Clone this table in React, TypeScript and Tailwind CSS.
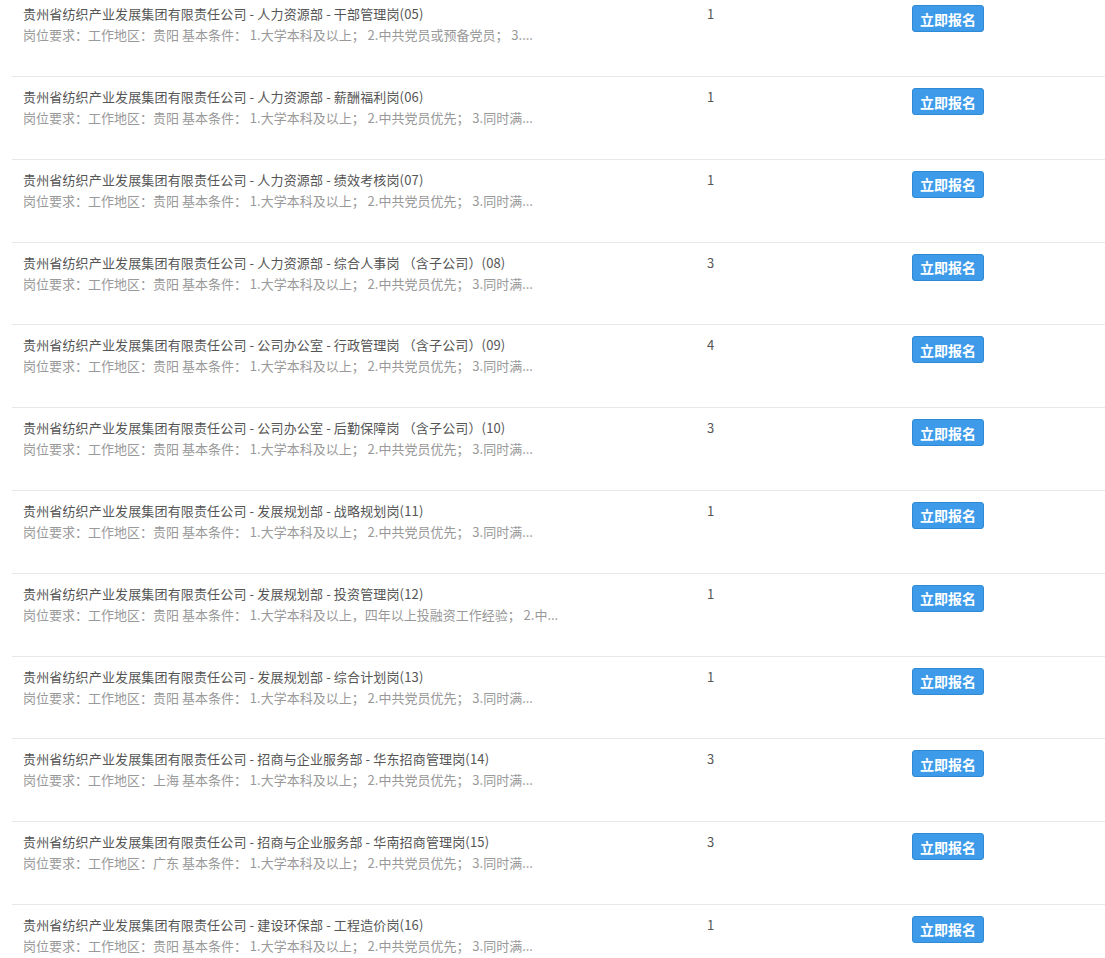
import React from "react";

const rows: { title: string; desc: string; n: string }[] = [
  { title: "贵州省纺织产业发展集团有限责任公司 - 人力资源部 - 干部管理岗(05)", desc: "岗位要求：工作地区：贵阳 基本条件： 1.大学本科及以上； 2.中共党员或预备党员； 3....", n: "1" },
  { title: "贵州省纺织产业发展集团有限责任公司 - 人力资源部 - 薪酬福利岗(06)", desc: "岗位要求：工作地区：贵阳 基本条件： 1.大学本科及以上； 2.中共党员优先； 3.同时满...", n: "1" },
  { title: "贵州省纺织产业发展集团有限责任公司 - 人力资源部 - 绩效考核岗(07)", desc: "岗位要求：工作地区：贵阳 基本条件： 1.大学本科及以上； 2.中共党员优先； 3.同时满...", n: "1" },
  { title: "贵州省纺织产业发展集团有限责任公司 - 人力资源部 - 综合人事岗 （含子公司）(08)", desc: "岗位要求：工作地区：贵阳 基本条件： 1.大学本科及以上； 2.中共党员优先； 3.同时满...", n: "3" },
  { title: "贵州省纺织产业发展集团有限责任公司 - 公司办公室 - 行政管理岗 （含子公司）(09)", desc: "岗位要求：工作地区：贵阳 基本条件： 1.大学本科及以上； 2.中共党员优先； 3.同时满...", n: "4" },
  { title: "贵州省纺织产业发展集团有限责任公司 - 公司办公室 - 后勤保障岗 （含子公司）(10)", desc: "岗位要求：工作地区：贵阳 基本条件： 1.大学本科及以上； 2.中共党员优先； 3.同时满...", n: "3" },
  { title: "贵州省纺织产业发展集团有限责任公司 - 发展规划部 - 战略规划岗(11)", desc: "岗位要求：工作地区：贵阳 基本条件： 1.大学本科及以上； 2.中共党员优先； 3.同时满...", n: "1" },
  { title: "贵州省纺织产业发展集团有限责任公司 - 发展规划部 - 投资管理岗(12)", desc: "岗位要求：工作地区：贵阳 基本条件： 1.大学本科及以上，四年以上投融资工作经验； 2.中...", n: "1" },
  { title: "贵州省纺织产业发展集团有限责任公司 - 发展规划部 - 综合计划岗(13)", desc: "岗位要求：工作地区：贵阳 基本条件： 1.大学本科及以上； 2.中共党员优先； 3.同时满...", n: "1" },
  { title: "贵州省纺织产业发展集团有限责任公司 - 招商与企业服务部 - 华东招商管理岗(14)", desc: "岗位要求：工作地区：上海 基本条件： 1.大学本科及以上； 2.中共党员优先； 3.同时满...", n: "3" },
  { title: "贵州省纺织产业发展集团有限责任公司 - 招商与企业服务部 - 华南招商管理岗(15)", desc: "岗位要求：工作地区：广东 基本条件： 1.大学本科及以上； 2.中共党员优先； 3.同时满...", n: "3" },
  { title: "贵州省纺织产业发展集团有限责任公司 - 建设环保部 - 工程造价岗(16)", desc: "岗位要求：工作地区：贵阳 基本条件： 1.大学本科及以上； 2.中共党员优先； 3.同时满...", n: "1" },
];

export default function App() {
  return (
    <div
      className="w-[1105px] h-[958px] overflow-hidden bg-white"
      style={{ fontFamily: '"Microsoft YaHei", "Noto Sans CJK SC", "Noto Sans", sans-serif' }}
    >
      <div className="mt-[-5.8px] ml-[12px]">
        {rows.map((r, i) => (
          <div
            key={i}
            className="box-border h-[82.8px] border-b border-[#e8e8e8] flex pl-[11px] pt-[10px]"
          >
            <div className="w-[684px] shrink-0">
              <div className="text-[13px] leading-[20px] text-[#555] whitespace-nowrap tracking-[0.15px]">{r.title}</div>
              <div className="text-[13px] leading-[22px] text-[#999] whitespace-nowrap">{r.desc}</div>
            </div>
            <div className="w-[205px] shrink-0 text-[13px] leading-[20px] text-[#555]">{r.n}</div>
            <div className="pt-[1px]">
              <button className="h-[27px] w-[72px] rounded-[3px] bg-[#3d9be9] border border-[#2f8ad6] text-white text-[14px] font-bold leading-none flex items-center justify-center">
                立即报名
              </button>
            </div>
          </div>
        ))}
      </div>
    </div>
  );
}
